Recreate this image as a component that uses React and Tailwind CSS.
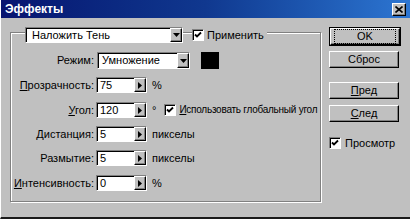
import React from "react";

const font = { fontFamily: '"Liberation Sans", Arial, sans-serif' };

const Raised = ({ className = "", children }) => (
  <div
    className={`border border-t-white border-l-white border-r-black border-b-black bg-[#c0c0c0] shadow-[inset_-1px_-1px_0_#808080] ${className}`}
  >
    {children}
  </div>
);

const Sunken = ({ className = "", children }) => (
  <div
    className={`border border-t-[#808080] border-l-[#808080] border-r-white border-b-white shadow-[inset_1px_1px_0_#000] ${className}`}
  >
    {children}
  </div>
);

const Check = () => (
  <Sunken className="w-[12px] h-[12px] bg-white flex items-center justify-center shrink-0">
    <svg width="8" height="8" viewBox="0 0 8 8">
      <path d="M1 3.5 L3 5.5 L7 1.5" stroke="#000" strokeWidth="1.8" fill="none" />
    </svg>
  </Sunken>
);

const DownArrow = () => (
  <Raised className="w-[12px] h-full flex items-center justify-center shrink-0">
    <svg width="7" height="4" viewBox="0 0 7 4">
      <path d="M0 0 H7 L3.5 4 Z" fill="#000" />
    </svg>
  </Raised>
);

const SpinField = ({ value }) => (
  <Sunken className="w-[51px] h-[16px] bg-white flex items-center shrink-0">
    <span className="flex-1 pl-[3px] text-[11px] leading-none">{value}</span>
    <Raised className="w-[12px] h-full flex items-center justify-center">
      <svg width="4" height="7" viewBox="0 0 4 7">
        <path d="M0 0 V7 L4 3.5 Z" fill="#000" />
      </svg>
    </Raised>
  </Sunken>
);

const Row = ({ label, ul, value, unit, className = "", children }) => (
  <div className={`flex items-center h-[16px] whitespace-nowrap ${className}`}>
    <div className="w-[85px] shrink-0 text-right pr-[2px] text-[11px] leading-none">
      {ul ? <span className="underline">{label[0]}</span> : label[0]}
      {label.slice(1)}
    </div>
    <SpinField value={value} />
    <span className="ml-[5px] text-[11px] leading-none">{unit}</span>
    {children}
  </div>
);

const Button = ({ children, className = "" }) => (
  <Raised className={`w-[70px] h-[17px] flex items-center justify-center text-[11px] leading-none ${className}`}>
    {children}
  </Raised>
);

export default function App() {
  return (
    <div
      className="w-[410px] h-[219px] bg-[#c0c0c0] border-l border-l-white border-b-2 border-b-[#1a1a1a] overflow-hidden text-black"
      style={font}
    >
      <div className="h-[18px] bg-gradient-to-r from-[#081470] via-[#10388f] to-[#2d76d2] flex items-center justify-between pl-[4px] pr-[4px]">
        <span className="text-white font-bold text-[12px] leading-none">Эффекты</span>
        <Raised className="w-[14px] h-[13px] flex items-center justify-center">
          <svg width="8" height="7" viewBox="0 0 8 7">
            <path d="M0.5 0.5 L7.5 6.5 M7.5 0.5 L0.5 6.5" stroke="#000" strokeWidth="1.6" />
          </svg>
        </Raised>
      </div>

      <div className="flex">
        <div className="ml-[9px] mt-[14px] w-[311px] h-[170px] shrink-0 border border-[#808080] shadow-[1px_1px_0_#fff,inset_1px_1px_0_#fff] flex flex-col">
          <div className="flex items-center h-[16px] -mt-[6px] whitespace-nowrap">
            <Sunken className="ml-[14px] w-[158px] h-[16px] bg-white flex items-center shrink-0">
              <span className="flex-1 pl-[6px] text-[11px] leading-none">Наложить Тень</span>
              <DownArrow />
            </Sunken>
            <div className="ml-[9px] flex items-center bg-[#c0c0c0] pr-[3px]">
              <Check />
              <span className="ml-[3px] text-[11px] leading-none">Применить</span>
            </div>
          </div>

          <div className="flex items-center h-[17px] mt-[9px]">
            <div className="w-[85px] shrink-0 text-right pr-[2px] text-[11px] leading-none">Режим:</div>
            <Sunken className="ml-[1px] w-[93px] h-[17px] bg-white flex items-center shrink-0">
              <span className="flex-1 pl-[4px] text-[11px] leading-none">Умножение</span>
              <DownArrow />
            </Sunken>
            <div className="ml-[11px] w-[18px] h-[17px] bg-black" />
          </div>

          <Row label="Прозрачность:" ul value="75" unit="%" className="mt-[8px]" />
          <Row label="Угол:" ul value="120" unit="°" className="mt-[9px]">
            <div className="ml-[8px] flex items-center">
              <Check />
              <span className="ml-[3px] text-[10px] leading-none tracking-[-0.25px]">
                <span className="underline">И</span>спользовать глобальный угол
              </span>
            </div>
          </Row>
          <Row label="Дистанция:" value="5" unit="пикселы" className="mt-[8px]" />
          <Row label="Размытие:" value="5" unit="пикселы" className="mt-[8px]" />
          <Row label="Интенсивность:" ul value="0" unit="%" className="mt-[9px]" />
        </div>

        <div className="ml-[8px] mt-[9px] flex flex-col">
          <div className="border border-black">
            <Button className="w-[68px] h-[15px]">
              <span className="px-[22px] py-[1px] outline outline-1 outline-dotted outline-black">OK</span>
            </Button>
          </div>
          <Button className="mt-[5px]">Сброс</Button>
          <Button className="mt-[14px]">
            <span>
              <span className="underline">П</span>ред
            </span>
          </Button>
          <Button className="mt-[6px]">
            <span>
              <span className="underline">С</span>лед
            </span>
          </Button>
          <div className="mt-[15px] flex items-center">
            <Check />
            <span className="ml-[4px] text-[11px] leading-none">Просмотр</span>
          </div>
        </div>
      </div>
    </div>
  );
}
